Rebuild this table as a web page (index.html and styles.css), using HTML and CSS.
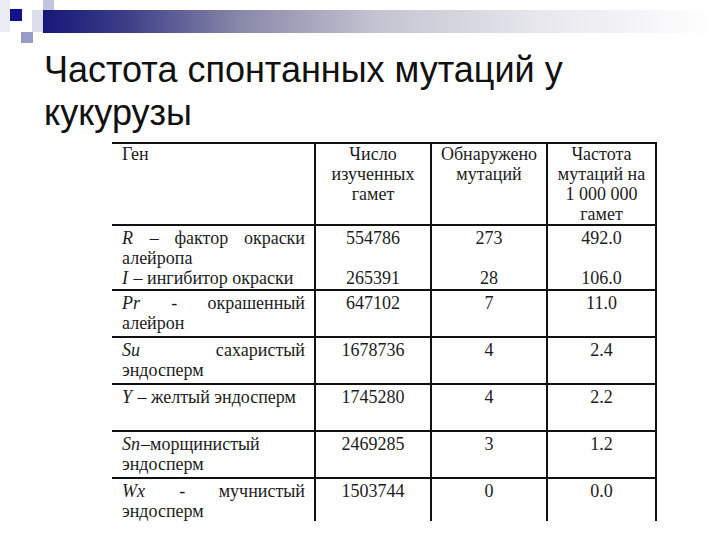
FILE: index.html
```html
<!DOCTYPE html>
<html lang="ru">
<head>
<meta charset="utf-8">
<link rel="stylesheet" href="styles.css">
</head>
<body>
<div class="slide">
  <svg class="deco" width="720" height="45" viewBox="0 0 720 45">
    <defs>
      <linearGradient id="bar" x1="0" y1="0" x2="1" y2="0">
        <stop offset="0" stop-color="#17177a"/>
        <stop offset="0.12" stop-color="#3c3c88"/>
        <stop offset="0.3" stop-color="#8a8aaa"/>
        <stop offset="0.5" stop-color="#c4c4d2"/>
        <stop offset="0.75" stop-color="#e8e8ee"/>
        <stop offset="1" stop-color="#ffffff"/>
      </linearGradient>
    </defs>
    <rect x="0" y="0" width="10" height="32" fill="#ececf4"/>
    <rect x="32" y="10" width="12" height="22" fill="#dcdcee"/>
    <rect x="43" y="0" width="11" height="22" fill="#c4c4e0"/>
    <rect x="43" y="10" width="670" height="23" fill="url(#bar)"/>
    <rect x="10" y="9" width="12" height="12" fill="#12128a"/>
    <rect x="21" y="32" width="12" height="11" fill="#9a9ac8"/>
  </svg>
  <h1 class="title">Частота спонтанных мутаций у кукурузы</h1>
  <table class="data">
    <colgroup>
      <col class="c1"><col class="c2"><col class="c3"><col class="c4">
    </colgroup>
    <tr class="head">
      <td class="name">Ген</td>
      <td class="num sep">Число<br>изученных<br>гамет</td>
      <td class="num sep">Обнаружено<br>мутаций</td>
      <td class="num">Частота<br>мутаций на<br>1 000 000<br>гамет</td>
    </tr>
    <tr class="first">
      <td class="name"><p><i>R</i> – фактор окраски алейропа</p><p><i>I</i> – ингибитор окраски</p></td>
      <td class="num sep">554786<br>&nbsp;<br>265391</td>
      <td class="num sep">273<br>&nbsp;<br>28</td>
      <td class="num">492.0<br>&nbsp;<br>106.0</td>
    </tr>
    <tr>
      <td class="name"><p><i>Pr</i> - окрашенный алейрон</p></td>
      <td class="num sep">647102</td>
      <td class="num sep">7</td>
      <td class="num">11.0</td>
    </tr>
    <tr>
      <td class="name"><p><i>Su</i> сахаристый эндосперм</p></td>
      <td class="num sep">1678736</td>
      <td class="num sep">4</td>
      <td class="num">2.4</td>
    </tr>
    <tr>
      <td class="name"><p><i>Y</i> – желтый эндосперм</p><p>&nbsp;</p></td>
      <td class="num sep">1745280</td>
      <td class="num sep">4</td>
      <td class="num">2.2</td>
    </tr>
    <tr>
      <td class="name"><p><i>Sn</i>–морщинистый эндосперм</p></td>
      <td class="num sep">2469285</td>
      <td class="num sep">3</td>
      <td class="num">1.2</td>
    </tr>
    <tr class="last">
      <td class="name"><p><i>Wx</i> - мучнистый эндосперм</p></td>
      <td class="num sep">1503744</td>
      <td class="num sep">0</td>
      <td class="num">0.0</td>
    </tr>
  </table>
</div>
</body>
</html>
```

FILE: styles.css
```css
html, body {
  margin: 0;
  padding: 0;
  background: #ffffff;
}
.slide {
  width: 720px;
  height: 540px;
  overflow: hidden;
  background: #ffffff;
}
.deco {
  display: block;
}
.title {
  margin: 3px 0 0 44px;
  width: 600px;
  font-family: "Liberation Sans", Arial, sans-serif;
  font-weight: normal;
  font-size: 36px;
  line-height: 43px;
  color: #111111;
}
.data {
  margin: 8px 0 0 112px;
  width: 544px;
  table-layout: fixed;
  border-collapse: collapse;
  font-family: "Liberation Serif", "Times New Roman", serif;
  font-size: 18px;
  line-height: 20px;
  color: #1c1c1c;
}
.data i {
  font-family: "Liberation Serif", "Times New Roman", serif;
  font-style: italic;
  padding-right: 1px;
}
.c1 { width: 203px; }
.c2 { width: 116px; }
.c3 { width: 116px; }
.c4 { width: 109px; }
.data td {
  vertical-align: top;
  padding: 2px 0 3px 0;
  border-top: 2px solid #111111;
}
.data .head td {
  padding: 0;
}
.data .first td {
  padding-bottom: 1px;
}
.data .last td {
  padding-bottom: 0;
}
.data td.sep {
  border-right: 2px solid #111111;
}
.data td.num:last-child {
  border-right: 2px solid #111111;
}
.data td.name {
  padding-left: 10px;
  padding-right: 9px;
  text-align: justify;
  border-right: 2px solid #111111;
}
.data td.name p {
  margin: 0;
  text-align: justify;
}
.data td.num {
  text-align: center;
}
```
